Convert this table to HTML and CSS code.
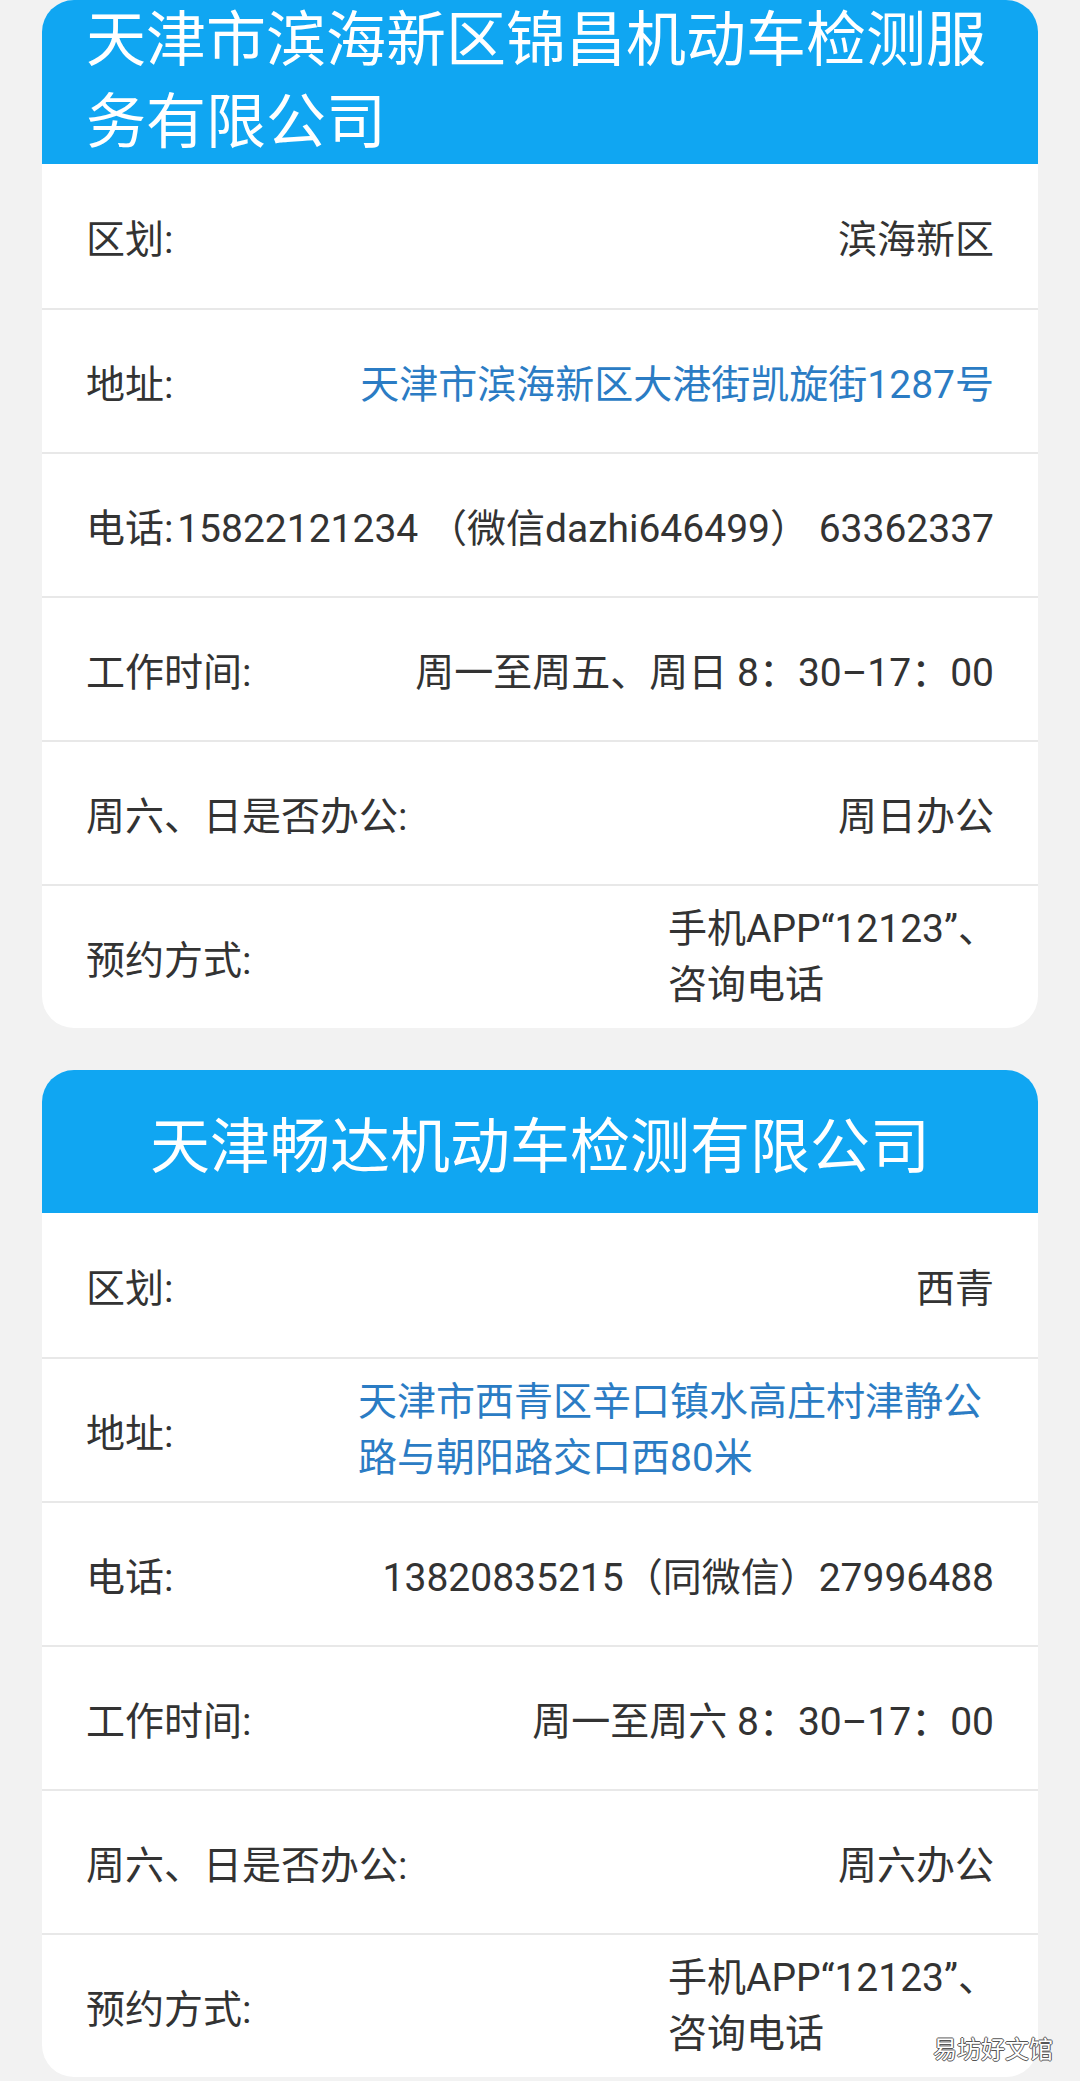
FILE: index.html
```html
<!DOCTYPE html>
<html lang="zh-CN">
<head>
<meta charset="utf-8">
<title>天津机动车检测</title>
<link rel="stylesheet" href="styles.css">
</head>
<body>
<main class="page">
  <section class="card">
    <h2 class="head head-left">天津市滨海新区锦昌机动车检测服务有限公司</h2>
    <div class="row first"><span class="label">区划:</span><span class="val">滨海新区</span></div>
    <div class="row"><span class="label">地址:</span><span class="val link">天津市滨海新区大港街凯旋街1287号</span></div>
    <div class="row"><span class="label">电话:</span><span class="val nowrap">15822121234 （微信dazhi646499） 63362337</span></div>
    <div class="row"><span class="label">工作时间:</span><span class="val">周一至周五、周日 8：30–17：00</span></div>
    <div class="row"><span class="label">周六、日是否办公:</span><span class="val">周日办公</span></div>
    <div class="row"><span class="label">预约方式:</span><span class="val multi book">手机APP“12123”、<br>咨询电话</span></div>
  </section>

  <section class="card">
    <h2 class="head head-center">天津畅达机动车检测有限公司</h2>
    <div class="row first"><span class="label">区划:</span><span class="val">西青</span></div>
    <div class="row"><span class="label">地址:</span><span class="val link multi addr">天津市西青区辛口镇水高庄村津静公路与朝阳路交口西80米</span></div>
    <div class="row"><span class="label">电话:</span><span class="val nowrap">13820835215（同微信）27996488</span></div>
    <div class="row"><span class="label">工作时间:</span><span class="val">周一至周六 8：30–17：00</span></div>
    <div class="row"><span class="label">周六、日是否办公:</span><span class="val">周六办公</span></div>
    <div class="row"><span class="label">预约方式:</span><span class="val multi book">手机APP“12123”、<br>咨询电话</span></div>
  </section>
</main>
<div class="watermark">易坊好文馆</div>
</body>
</html>
```

FILE: styles.css
```css
html, body {
  margin: 0;
  padding: 0;
}

body {
  position: relative;
  background: #f2f2f2;
  font-family: Roboto, "Noto Sans CJK SC", "Noto Sans", sans-serif;
  color: #333333;
}

.page {
  padding: 0 42px;
  display: flex;
  flex-direction: column;
  gap: 42px;
}

.card {
  background: #ffffff;
  border-radius: 32px;
  overflow: hidden;
}

.head {
  margin: 0;
  background: #10a6f2;
  color: #ffffff;
  font-weight: normal;
  font-size: 60px;
}

.head-left {
  line-height: 82px;
  padding: 0 44px;
}

.head-center {
  height: 143px;
  display: flex;
  align-items: center;
  justify-content: center;
}

.row {
  display: flex;
  justify-content: space-between;
  align-items: center;
  height: 142px;
  padding: 0 44px;
  border-top: 2px solid #e8e8e8;
  font-size: 39px;
}

.row.first {
  border-top: none;
  height: 144px;
}

.label {
  white-space: nowrap;
}

.val {
  text-align: right;
}

.nowrap {
  white-space: nowrap;
}

.link {
  color: #2b7cc4;
}

.multi {
  text-align: left;
  line-height: 56px;
}

.addr {
  width: 636px;
}

.book {
  width: 326px;
  white-space: nowrap;
}

.watermark {
  position: absolute;
  left: 933px;
  top: 2030px;
  font-size: 24px;
  color: #ffffff;
  text-shadow: -1px 0 #555, 1px 0 #555, 0 -1px #555, 0 1px #555;
  font-family: "Noto Sans CJK SC", sans-serif;
}
```
